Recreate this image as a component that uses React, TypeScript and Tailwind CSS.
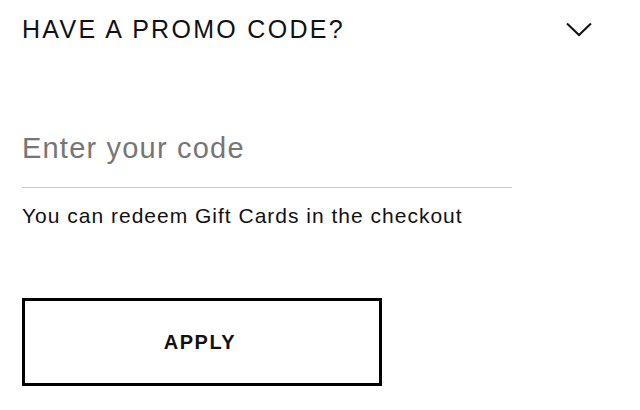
import React from "react";

export default function App() {
  return (
    <div
      className="w-[640px] h-[410px] bg-white text-black pl-[22px] pr-[48px]"
      style={{ fontFamily: '"Liberation Sans", Arial, sans-serif' }}
    >
      <div className="flex items-center justify-between h-[58px]">
        <span className="text-[25px] leading-[25px] tracking-[2.3px] text-[#111]">HAVE A PROMO CODE?</span>
        <svg width="26" height="15" viewBox="0 0 26 15" fill="none">
          <path d="M1 1.5 L13 13 L25 1.5" stroke="#111" strokeWidth="2" />
        </svg>
      </div>
      <div className="mt-[72px] w-[490px] border-b border-[#c8c8c8] h-[58px]">
        <input
          className="w-full bg-transparent outline-none text-[29px] leading-[36px] tracking-[1.2px] text-[#111] placeholder:text-[#767676]"
          placeholder="Enter your code"
        />
      </div>
      <p className="mt-[16px] text-[21px] leading-[24px] tracking-[1px] text-[#111]">
        You can redeem Gift Cards in the checkout
      </p>
      <button className="mt-[70px] w-[360px] h-[88px] border-[3px] border-black flex items-center justify-center pr-[4px] text-[20px] font-bold tracking-[1.5px] text-[#111]">
        APPLY
      </button>
    </div>
  );
}
